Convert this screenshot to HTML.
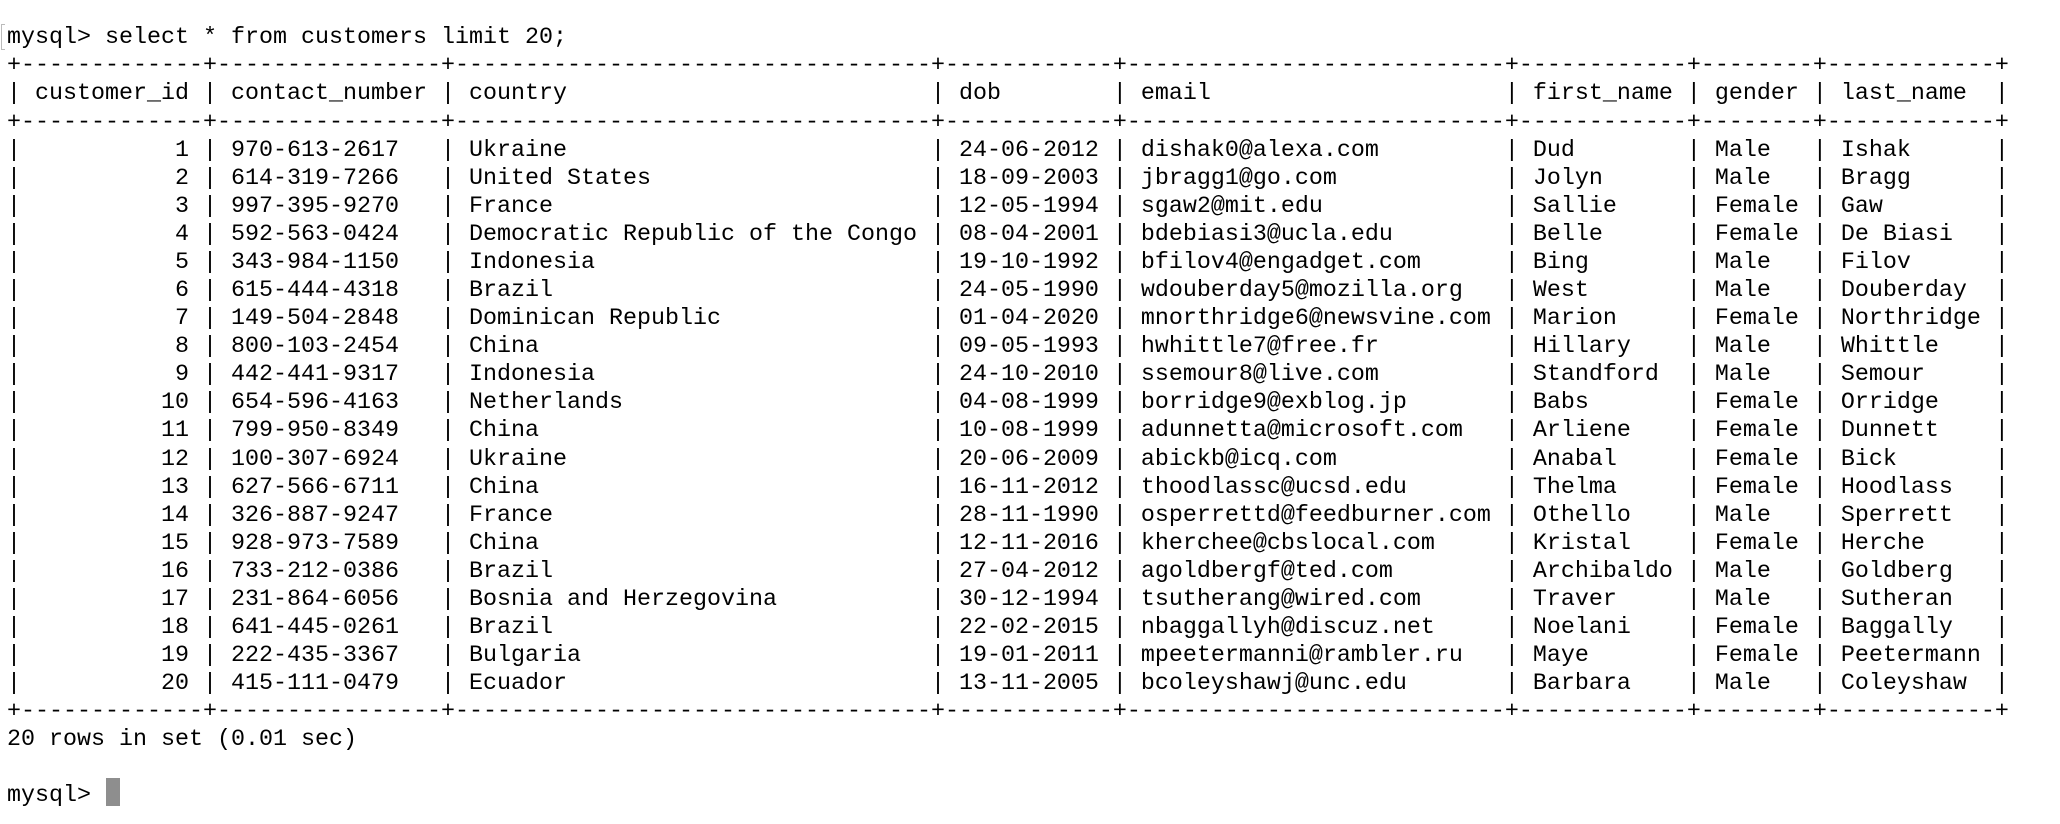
<!DOCTYPE html>
<html><head><meta charset="utf-8"><style>
html,body{margin:0;padding:0;background:#fff;width:2060px;height:824px;overflow:hidden;position:relative}
.l{position:absolute;left:7px;margin:0;white-space:pre;font-family:"Liberation Mono",monospace;font-size:23.33px;line-height:28px;height:28px;color:#000}
.cur{position:absolute;left:106px;top:778px;width:14px;height:28px;background:#8e8e8e}
.br{position:absolute;left:1px;top:24px;width:3px;height:24px;border:1px solid #bbb;border-right:none}
</style></head><body>
<div class="br"></div>
<div class="l" style="top:24.3px">mysql&gt; select * from customers limit 20;</div>
<div class="l" style="top:52.38px">+-------------+----------------+----------------------------------+------------+---------------------------+------------+--------+------------+</div>
<div class="l" style="top:80.46px">| customer_id | contact_number | country                          | dob        | email                     | first_name | gender | last_name  |</div>
<div class="l" style="top:108.54px">+-------------+----------------+----------------------------------+------------+---------------------------+------------+--------+------------+</div>
<div class="l" style="top:136.62px">|           1 | 970-613-2617   | Ukraine                          | 24-06-2012 | dishak0@alexa.com         | Dud        | Male   | Ishak      |</div>
<div class="l" style="top:164.7px">|           2 | 614-319-7266   | United States                    | 18-09-2003 | jbragg1@go.com            | Jolyn      | Male   | Bragg      |</div>
<div class="l" style="top:192.78px">|           3 | 997-395-9270   | France                           | 12-05-1994 | sgaw2@mit.edu             | Sallie     | Female | Gaw        |</div>
<div class="l" style="top:220.86px">|           4 | 592-563-0424   | Democratic Republic of the Congo | 08-04-2001 | bdebiasi3@ucla.edu        | Belle      | Female | De Biasi   |</div>
<div class="l" style="top:248.94px">|           5 | 343-984-1150   | Indonesia                        | 19-10-1992 | bfilov4@engadget.com      | Bing       | Male   | Filov      |</div>
<div class="l" style="top:277.02px">|           6 | 615-444-4318   | Brazil                           | 24-05-1990 | wdouberday5@mozilla.org   | West       | Male   | Douberday  |</div>
<div class="l" style="top:305.1px">|           7 | 149-504-2848   | Dominican Republic               | 01-04-2020 | mnorthridge6@newsvine.com | Marion     | Female | Northridge |</div>
<div class="l" style="top:333.18px">|           8 | 800-103-2454   | China                            | 09-05-1993 | hwhittle7@free.fr         | Hillary    | Male   | Whittle    |</div>
<div class="l" style="top:361.26px">|           9 | 442-441-9317   | Indonesia                        | 24-10-2010 | ssemour8@live.com         | Standford  | Male   | Semour     |</div>
<div class="l" style="top:389.34px">|          10 | 654-596-4163   | Netherlands                      | 04-08-1999 | borridge9@exblog.jp       | Babs       | Female | Orridge    |</div>
<div class="l" style="top:417.42px">|          11 | 799-950-8349   | China                            | 10-08-1999 | adunnetta@microsoft.com   | Arliene    | Female | Dunnett    |</div>
<div class="l" style="top:445.5px">|          12 | 100-307-6924   | Ukraine                          | 20-06-2009 | abickb@icq.com            | Anabal     | Female | Bick       |</div>
<div class="l" style="top:473.58px">|          13 | 627-566-6711   | China                            | 16-11-2012 | thoodlassc@ucsd.edu       | Thelma     | Female | Hoodlass   |</div>
<div class="l" style="top:501.66px">|          14 | 326-887-9247   | France                           | 28-11-1990 | osperrettd@feedburner.com | Othello    | Male   | Sperrett   |</div>
<div class="l" style="top:529.74px">|          15 | 928-973-7589   | China                            | 12-11-2016 | kherchee@cbslocal.com     | Kristal    | Female | Herche     |</div>
<div class="l" style="top:557.82px">|          16 | 733-212-0386   | Brazil                           | 27-04-2012 | agoldbergf@ted.com        | Archibaldo | Male   | Goldberg   |</div>
<div class="l" style="top:585.9px">|          17 | 231-864-6056   | Bosnia and Herzegovina           | 30-12-1994 | tsutherang@wired.com      | Traver     | Male   | Sutheran   |</div>
<div class="l" style="top:613.98px">|          18 | 641-445-0261   | Brazil                           | 22-02-2015 | nbaggallyh@discuz.net     | Noelani    | Female | Baggally   |</div>
<div class="l" style="top:642.06px">|          19 | 222-435-3367   | Bulgaria                         | 19-01-2011 | mpeetermanni@rambler.ru   | Maye       | Female | Peetermann |</div>
<div class="l" style="top:670.14px">|          20 | 415-111-0479   | Ecuador                          | 13-11-2005 | bcoleyshawj@unc.edu       | Barbara    | Male   | Coleyshaw  |</div>
<div class="l" style="top:698.22px">+-------------+----------------+----------------------------------+------------+---------------------------+------------+--------+------------+</div>
<div class="l" style="top:726.3px">20 rows in set (0.01 sec)</div>
<div class="l" style="top:782.46px">mysql&gt; </div>
<div class="cur"></div>
</body></html>
